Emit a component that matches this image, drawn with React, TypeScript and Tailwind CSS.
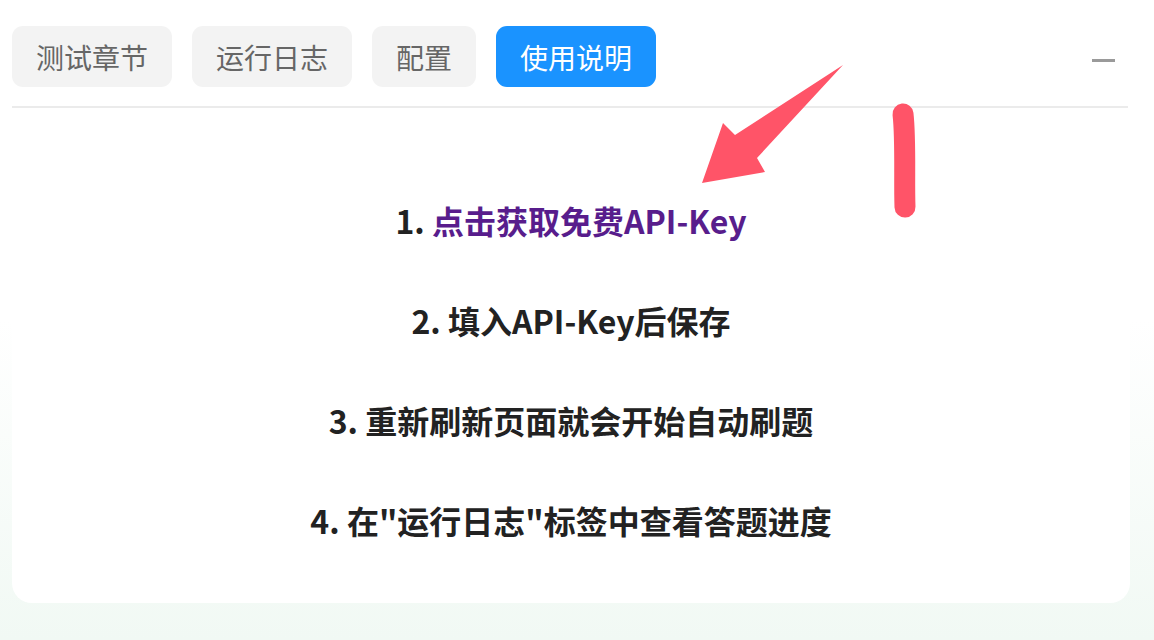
const tabs = [
  { label: '测试章节', active: false },
  { label: '运行日志', active: false },
  { label: '配置', active: false },
  { label: '使用说明', active: true },
];

const cjk = "font-['Noto_Sans_CJK_SC','Noto_Sans',sans-serif]";

export default function App() {
  return (
    <div
      className={`relative w-[1154px] h-[640px] overflow-hidden bg-gradient-to-b from-white from-50% to-[#f1f9f4] ${cjk}`}
    >
      <div className="ml-[12px] w-[1118px] h-[593px] mt-[10px] bg-white rounded-[20px] flex flex-col">
        <div className="flex items-center gap-[20px] pt-[16px] pb-[19px] border-b-2 border-[#ebebeb] mr-[2px]">
          {tabs.map((t) => (
            <button
              key={t.label}
              className={
                t.active
                  ? 'h-[61px] px-[24px] rounded-[11px] bg-[#1a93ff] text-white text-[28px] leading-none'
                  : 'h-[61px] px-[24px] rounded-[11px] bg-[#f3f3f3] text-[#666666] text-[28px] leading-none'
              }
            >
              {t.label}
            </button>
          ))}
          <div className="ml-auto mr-[13px] mt-[8px] w-[23px] h-[3px] bg-[#9a9a9a]" />
        </div>

        <div className="flex flex-col items-center pt-[62px] text-[32px] font-bold text-[#222222]">
          <div className="h-[100px] leading-[100px]">
            1. <a className="text-[#581d8c] cursor-pointer">点击获取免费API-Key</a>
          </div>
          <div className="h-[100px] leading-[100px]">2. 填入API-Key后保存</div>
          <div className="h-[100px] leading-[100px]">3. 重新刷新页面就会开始自动刷题</div>
          <div className="h-[100px] leading-[100px]">4. 在"运行日志"标签中查看答题进度</div>
        </div>
      </div>

      {/* annotation drawn on top of the screenshot */}
      <svg
        className="absolute top-0 left-0 pointer-events-none"
        width="1154"
        height="640"
        viewBox="0 0 1154 640"
      >
        <polygon
          points="702,183 723,123 735,135 843,65 757,158 765,172"
          fill="#ff5468"
        />
        <path
          d="M903 114 C 906 140, 904 180, 905 207"
          stroke="#ff5468"
          strokeWidth="21"
          strokeLinecap="round"
          fill="none"
        />
      </svg>
    </div>
  );
}
